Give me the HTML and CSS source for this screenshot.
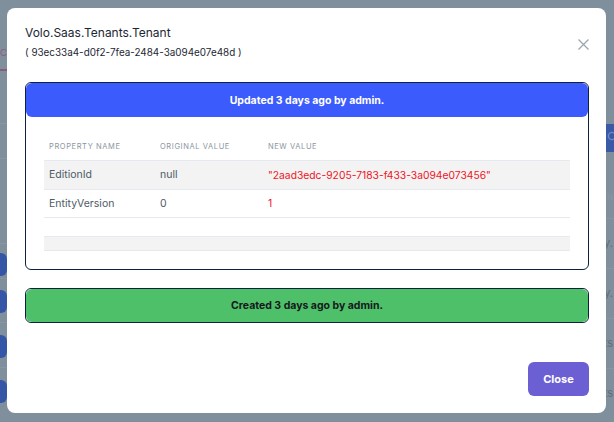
FILE: index.html
```html
<!DOCTYPE html>
<html lang="en">
<head>
<meta charset="utf-8">
<title>Audit log</title>
<link rel="stylesheet" href="styles.css">
</head>
<body>
<div class="backdrop">
  <div class="side side-left">
    <div class="tab-text">C</div>
    <div class="tab-line"></div>
    <div class="bg-line gap-52"></div>
    <div class="bg-line gap-34"></div>
    <div class="bg-line gap-84"></div>
    <div class="bg-btn gap-9"></div>
    <div class="bg-line gap-2"></div>
    <div class="bg-btn gap-11"></div>
    <div class="bg-line gap-9"></div>
    <div class="bg-btn gap-12"></div>
    <div class="bg-line gap-9"></div>
    <div class="bg-btn gap-12"></div>
  </div>
  <div class="side side-right">
    <div class="search-btn">
      <svg width="12" height="12" viewBox="0 0 12 12"><circle cx="6" cy="5" r="3.6" stroke="#7089c4" stroke-width="1.4" fill="none"/><path d="M8.6 7.6 L11 10" stroke="#7089c4" stroke-width="1.4"/></svg>
    </div>
    <div class="bg-head">N</div>
    <div class="bg-line gap-6"></div>
    <div class="bg-cell">Monthly.</div>
    <div class="bg-line"></div>
    <div class="bg-cell">Yearly.</div>
    <div class="bg-line"></div>
    <div class="bg-cell">Tenants</div>
    <div class="bg-line"></div>
    <div class="bg-cell">Tenants</div>
  </div>
</div>

<div class="modal">
  <button class="modal-close" aria-label="Close">
    <svg width="11" height="11" viewBox="0 0 11 11"><path d="M0.5 0.5 L10.5 10.5 M10.5 0.5 L0.5 10.5" stroke="#9ca6b1" stroke-width="1.3" fill="none"/></svg>
  </button>
  <div class="modal-header">
    <div class="modal-title">Volo.Saas.Tenants.Tenant</div>
    <div class="modal-subtitle">( 93ec33a4-d0f2-7fea-2484-3a094e07e48d )</div>
  </div>
  <div class="modal-body">
    <div class="change-card">
      <div class="change-head head-updated">Updated 3 days ago by admin.</div>
      <table class="change-table">
        <thead>
          <tr class="row-head">
            <th class="col-name">Property Name</th>
            <th class="col-orig">Original Value</th>
            <th>New Value</th>
          </tr>
        </thead>
        <tbody>
          <tr class="row-a striped">
            <td>EditionId</td>
            <td>null</td>
            <td class="new-val">"2aad3edc-9205-7183-f433-3a094e073456"</td>
          </tr>
          <tr class="row-b">
            <td>EntityVersion</td>
            <td>0</td>
            <td class="new-val">1</td>
          </tr>
          <tr class="row-c"><td></td><td></td><td></td></tr>
          <tr class="row-d striped"><td></td><td></td><td></td></tr>
        </tbody>
      </table>
    </div>
    <div class="change-card created-card">
      <div class="change-head head-created">Created 3 days ago by admin.</div>
    </div>
  </div>
  <div class="modal-footer">
    <button class="btn-close">Close</button>
  </div>
</div>
</body>
</html>
```

FILE: styles.css
```css
* { box-sizing: border-box; }

html, body {
  margin: 0;
  padding: 0;
  width: 614px;
  height: 422px;
  overflow: hidden;
  background: #7f8f9c;
  font-family: Inter, "Noto Sans", "Liberation Sans", sans-serif;
}

.backdrop {
  display: flex;
  justify-content: space-between;
  height: 422px;
}

.side {
  width: 200px;
  display: flex;
  flex-direction: column;
}

.side-right { align-items: flex-end; }

.tab-text {
  margin-top: 46px;
  margin-left: 0;
  font-size: 9.5px;
  line-height: 14px;
  color: #8c5d80;
  height: 14px;
}

.tab-line {
  margin-top: 9px;
  height: 2px;
  background: #8b5a7f;
}

.bg-line {
  align-self: stretch;
  height: 1px;
  background: #8995a2;
  flex: none;
}

.gap-52 { margin-top: 52px; }
.gap-34 { margin-top: 34px; }
.gap-84 { margin-top: 84px; }
.gap-9 { margin-top: 9px; }
.gap-2 { margin-top: 2px; }
.gap-11 { margin-top: 11px; }
.gap-12 { margin-top: 12px; }
.gap-6 { margin-top: 6px; }

.bg-btn {
  flex: none;
  width: 14px;
  height: 23px;
  margin-left: -7px;
  border-radius: 6px;
  background: #3556a6;
}

.search-btn {
  margin-top: 124px;
  height: 28px;
  width: 8px;
  background: #3a5aa8;
  overflow: hidden;
  padding-top: 7px;
}

.search-btn svg { display: block; }

.bg-head {
  margin-top: 30px;
  height: 30px;
  font-size: 8px;
  line-height: 30px;
  color: #8a97a3;
  padding-right: 1px;
}

.bg-cell {
  flex: none;
  height: 49px;
  line-height: 49px;
  font-size: 11px;
  color: #5f6d7a;
  padding-right: 1px;
  white-space: nowrap;
}

/* Modal */
.modal {
  position: fixed;
  left: 7px;
  top: 8px;
  width: 599px;
  height: 405px;
  background: #ffffff;
  border-radius: 8px;
  padding: 17px 17px 17px 18px;
  display: flex;
  flex-direction: column;
}

.modal-close {
  position: absolute;
  top: 31px;
  right: 17px;
  width: 11px;
  height: 11px;
  padding: 0;
  border: 0;
  background: none;
  display: block;
}

.modal-close svg { display: block; }

.modal-header {
  display: flex;
  flex-direction: column;
  gap: 4px;
}

.modal-title {
  font-size: 12px;
  line-height: 16px;
  color: #1d2733;
}

.modal-subtitle {
  font-size: 9.9px;
  line-height: 14px;
  color: #1d2733;
}

.modal-body {
  margin-top: 23px;
  display: flex;
  flex-direction: column;
  gap: 18px;
}

.change-card {
  border: 1px solid #0e2240;
  border-radius: 6px;
  padding-bottom: 18px;
}

.created-card { padding-bottom: 0; }

.change-head {
  height: 34px;
  border-radius: 6px;
  display: flex;
  align-items: center;
  justify-content: center;
  font-size: 10.5px;
  font-weight: 700;
}

.head-updated {
  background: #3b5bfc;
  color: #ffffff;
}

.head-created {
  height: 33px;
  background: #4fc06a;
  color: #15191d;
}

.change-table {
  margin: 16px 18px 0 18px;
  width: calc(100% - 36px);
  border-collapse: collapse;
  table-layout: fixed;
  font-size: 10.5px;
  color: #4e5a67;
}

.change-table th,
.change-table td {
  text-align: left;
  padding: 0 0 0 5px;
  border-bottom: 1px solid #e6eaf0;
  white-space: nowrap;
  overflow: hidden;
}

.change-table th {
  font-size: 7.5px;
  font-weight: 400;
  letter-spacing: 0.08em;
  text-transform: uppercase;
  color: #8b96a2;
}

.col-name { width: 111px; }
.col-orig { width: 108px; }

.row-head th { height: 27px; }
.row-a td { height: 29px; }
.row-b td { height: 28px; }
.row-c td { height: 19px; }
.row-d td { height: 14px; }

.striped td { background: #f3f3f3; }

.change-table td.new-val {
  color: #f0141f;
  font-size: 10.3px;
}

.modal-footer {
  margin-top: auto;
  display: flex;
  justify-content: flex-end;
}

.btn-close {
  width: 61px;
  height: 34px;
  border: 0;
  border-radius: 6px;
  background: #6c5fd3;
  color: #ffffff;
  font-family: inherit;
  font-size: 11px;
  font-weight: 700;
}
```
